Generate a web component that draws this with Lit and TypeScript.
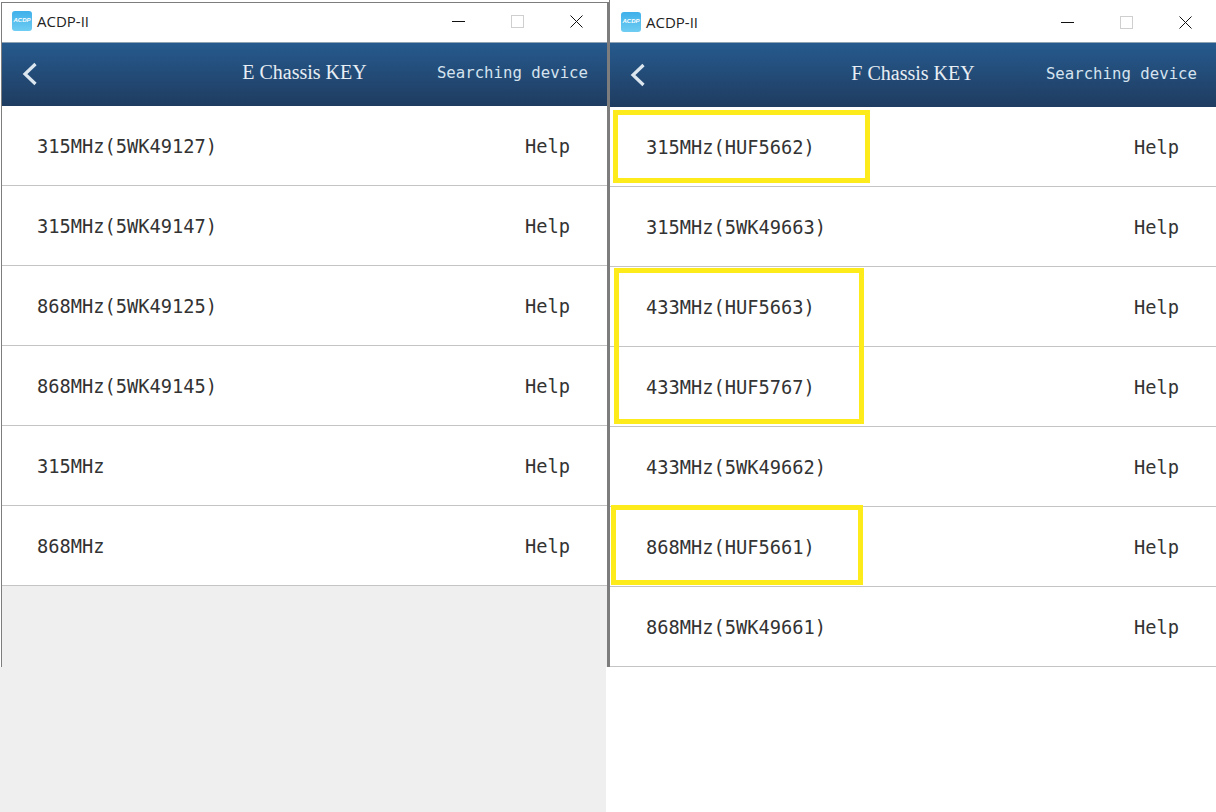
import { LitElement, html, css } from "lit";
import { customElement, property } from "lit/decorators.js";

@customElement("acdp-window")
class AcdpWindow extends LitElement {
  @property() heading = "";
  @property({ attribute: false }) items: string[] = [];
  static styles = css`
    :host { display: flex; flex-direction: column; flex: 1; min-height: 0; background: #efefef; }
    .titlebar { display: flex; align-items: center; height: 39px; flex: none; background: #fff; padding: 0 0 var(--bar-bottom, 3px) var(--bar-inset, 11px); box-sizing: border-box; }
    .logo { width: 20px; height: 20px; border-radius: 3px; background: linear-gradient(#3fb0ea, #6fcdf2); display: flex; align-items: center; justify-content: center; color: #fff; font: italic 700 6px "Liberation Sans", sans-serif; padding-bottom: 3px; box-sizing: border-box; }
    .name { margin-left: 5px; font: 15px "Open Sans", "Noto Sans", sans-serif; color: #222; flex: 1; }
    .controls { display: flex; align-items: center; margin-right: 24px; gap: 46px; }
    .controls svg { display: block; width: 13px; height: 13px; }
    .header { height: var(--head-h, 64px); flex: none; box-sizing: border-box; border-top: 1px solid #8fa3b5; background: linear-gradient(#265a8e, #1f3c60); display: grid; grid-template-columns: 1fr auto 1fr; align-items: center; color: #fff; padding: 0 19px var(--head-bottom, 4px) 19px; }
    .back { display: block; width: 17px; height: 26px; margin-top: 3px; }
    .title { font: 20px "Liberation Serif", serif; color: #e8eef4; }
    .search { justify-self: end; font: 15.7px "DejaVu Sans Mono", monospace; color: #d5e3ef; }
    .list { background: #fff; }
    .row { height: 80px; box-sizing: border-box; border-bottom: 1px solid #c4c4c4; display: flex; align-items: center; justify-content: space-between; padding: 1px 37px 0 var(--row-inset, 36px); font: 18.7px "DejaVu Sans Mono", monospace; color: #333; }
  `;
  render() {
    return html`
      <div class="titlebar">
        <div class="logo">ACDP</div>
        <div class="name">ACDP-II</div>
        <div class="controls">
          <svg viewBox="0 0 13 13"><path d="M0 6.5H13" stroke="#111" stroke-width="1"/></svg>
          <svg viewBox="0 0 13 13"><rect x=".5" y=".5" width="12" height="12" fill="none" stroke="#cfcfcf"/></svg>
          <svg viewBox="0 0 13 13"><path d="M.5.5 12.5 12.5M12.5.5.5 12.5" stroke="#111" stroke-width="1"/></svg>
        </div>
      </div>
      <div class="header">
        <svg class="back" viewBox="0 0 17 26"><path d="M14.5 3 4 13 14.5 23" fill="none" stroke="#dce6ef" stroke-width="3.2"/></svg>
        <div class="title">${this.heading}</div>
        <div class="search">Searching device</div>
      </div>
      <div class="list">
        ${this.items.map((t) => html`<div class="row"><span>${t}</span><span>Help</span></div>`)}
      </div>
    `;
  }
}

const E = ["315MHz(5WK49127)", "315MHz(5WK49147)", "868MHz(5WK49125)", "868MHz(5WK49145)", "315MHz", "868MHz"];
const F = ["315MHz(HUF5662)", "315MHz(5WK49663)", "433MHz(HUF5663)", "433MHz(HUF5767)", "433MHz(5WK49662)", "868MHz(HUF5661)", "868MHz(5WK49661)"];

@customElement("app-root")
class AppRoot extends LitElement {
  static styles = css`
    :host { display: block; width: 1216px; height: 812px; overflow: hidden; background: #fff; }
    .page { display: grid; grid-template-columns: 609px 607px; height: 812px; }
    .left { display: flex; flex-direction: column; }
    .frame { display: flex; flex-direction: column; box-sizing: border-box; }
    .frame-left { --row-inset: 35px; --bar-inset: 10px; height: 665px; margin-top: 2px; margin-left: 1px; border: 1px solid #7d7d7d; border-bottom: 0; border-right: 2px solid #7d7d7d; }
    .below { flex: 1; width: 606px; background: #efefef; }
    .right { position: relative; }
    .frame-right { --bar-bottom: 1px; --head-h: 65px; --head-bottom: 3px; height: 667px; padding-top: 3px; border-left: 1px solid #7d7d7d; border-bottom: 0; }
    .mark { position: absolute; box-sizing: border-box; border: 5px solid #fdeb1c; pointer-events: none; }
    .m1 { left: 4px; top: 110px; width: 257px; height: 73px; }
    .m2 { left: 5px; top: 268px; width: 250px; height: 156px; }
    .m3 { left: 2px; top: 505px; width: 252px; height: 80px; }
  `;
  render() {
    return html`
      <div class="page">
        <div class="left">
          <div class="frame frame-left"><acdp-window heading="E Chassis KEY" .items=${E}></acdp-window></div>
          <div class="below"></div>
        </div>
        <div class="right">
          <div class="frame frame-right"><acdp-window heading="F Chassis KEY" .items=${F}></acdp-window></div>
          <div class="mark m1"></div>
          <div class="mark m2"></div>
          <div class="mark m3"></div>
        </div>
      </div>
    `;
  }
}
